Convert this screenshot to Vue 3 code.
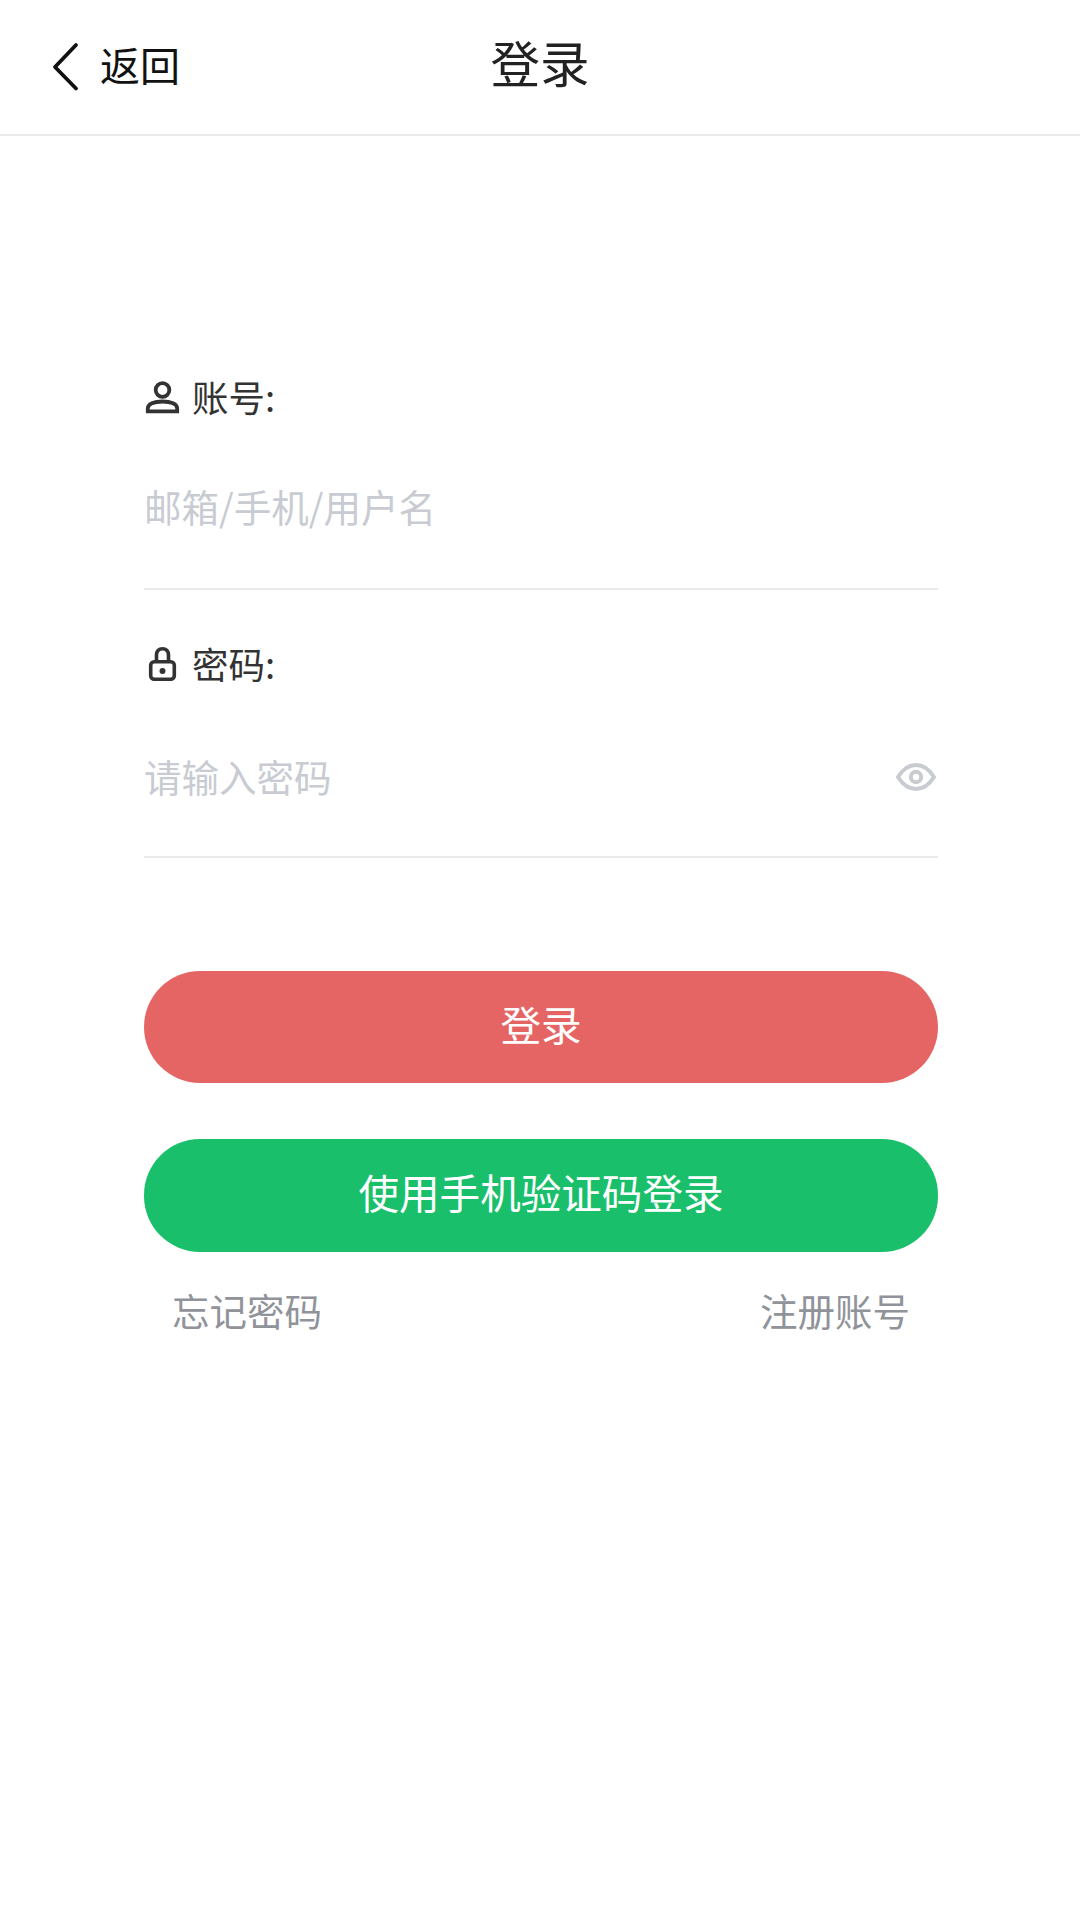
<script setup>
const bottomLinks = ['忘记密码', '注册账号']
</script>

<template>
  <div class="page">
    <header class="nav">
      <div class="back">
        <svg class="back-icon" viewBox="0 0 30 64" width="30" height="64">
          <path d="M26 11 L5 33 L26 54.500" fill="none" stroke="#111" stroke-width="3.800" stroke-linecap="round" stroke-linejoin="round" />
        </svg>
        <span class="back-text">返回</span>
      </div>
      <div class="title">登录</div>
    </header>

    <main class="form">
      <div class="label">
        <svg class="label-icon" viewBox="0 0 36 36" width="36" height="36">
          <circle cx="18.5" cy="11" r="6.800" fill="none" stroke="#333" stroke-width="3.800" />
          <path d="M3.800 32.300 V29.500 C3.800 25 10 22.500 18.500 22.500 C27 22.500 33.200 25 33.200 29.500 V32.300 Z" fill="none" stroke="#333" stroke-width="3.800" />
        </svg>
        <span class="label-text">账号:</span>
      </div>
      <div class="field field-user">
        <span class="placeholder">邮箱/手机/用户名</span>
      </div>

      <div class="label label-pwd">
        <svg class="label-icon" viewBox="0 0 36 36" width="36" height="36">
          <rect x="6.700" y="15.700" width="23.600" height="17.600" rx="3.500" fill="none" stroke="#333" stroke-width="3.600" />
          <path d="M12.500 15.700 V9 C12.500 5 15 2.700 18.500 2.700 C22 2.700 24.500 5 24.500 9 V15.700" fill="none" stroke="#333" stroke-width="3.600" />
          <circle cx="18.500" cy="25" r="3" fill="#333" />
        </svg>
        <span class="label-text">密码:</span>
      </div>
      <div class="field field-pwd">
        <span class="placeholder">请输入密码</span>
        <svg class="eye" viewBox="0 0 40 28" width="40" height="28">
          <path d="M2 14 C7 6 13 2 20 2 C27 2 33 6 38 14 C33 22 27 26 20 26 C13 26 7 22 2 14 Z" fill="none" stroke="#c8cbd0" stroke-width="4" stroke-linejoin="round" />
          <circle cx="20" cy="14" r="5.200" fill="none" stroke="#c8cbd0" stroke-width="4" />
        </svg>
      </div>

      <button class="btn btn-red">登录</button>
      <button class="btn btn-green">使用手机验证码登录</button>

      <div class="links">
        <span v-for="link in bottomLinks" :key="link">{{ link }}</span>
      </div>
    </main>
  </div>
</template>

<style scoped>
.page {
  width: 1080px;
  height: 1920px;
  background: #fff;
  font-family: "Noto Sans CJK SC", "Liberation Sans", sans-serif;
  overflow: hidden;
}
.nav {
  position: relative;
  height: 134px;
  border-bottom: 2px solid #e9eaec;
  display: flex;
  align-items: center;
  justify-content: center;
}
.back {
  position: absolute;
  left: 50px;
  top: 34px;
  display: flex;
  align-items: center;
  gap: 20px;
  font-size: 40px;
  line-height: 50px;
  color: #111;
}
.back-text {
  margin-top: -5px;
}
.title {
  font-size: 49.500px;
  color: #222;
  line-height: 60px;
  margin-top: -10px;
}
.form {
  padding: 235px 142px 0 144px;
}
.label {
  height: 52px;
  display: flex;
  align-items: center;
  gap: 12px;
  font-size: 36.500px;
  color: #333;
}
.label-pwd {
  margin-top: -2px;
}
.label-text {
  margin-top: -2px;
}
.field {
  height: 166px;
  margin-bottom: 50px;
  border-bottom: 2px solid #e9eaec;
  display: flex;
  align-items: center;
  justify-content: space-between;
  box-sizing: border-box;
}
.field-user {
  height: 167px;
}
.field-pwd {
  height: 168px;
  padding-top: 4px;
}
.placeholder {
  font-size: 37.500px;
  color: #c8cbd2;
}
.eye {
  margin: 3px 2px 0 0;
}
.btn {
  display: block;
  width: 100%;
  height: 112px;
  border: none;
  border-radius: 56px;
  color: #fff;
  font-family: inherit;
  font-size: 40.600px;
  padding: 0 0 8px;
}
.btn-red {
  background: #e56565;
  margin-top: 113px;
}
.btn-green {
  background: #1abf6b;
  height: 113px;
  margin-top: 56px;
}
.links {
  display: flex;
  justify-content: space-between;
  padding: 0 28px;
  margin-top: 33px;
  font-size: 37.500px;
  line-height: 50px;
  color: #909399;
}
</style>
